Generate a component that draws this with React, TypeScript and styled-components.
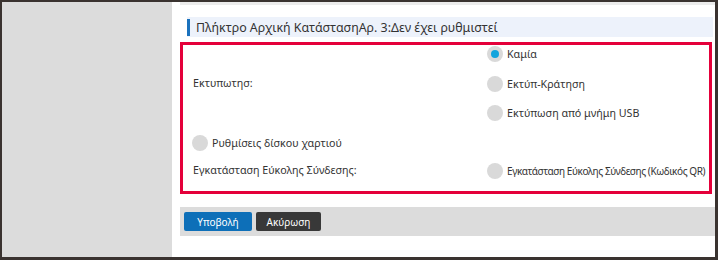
import React from "react";
import styled, { createGlobalStyle } from "styled-components";

const GlobalStyle = createGlobalStyle`
  body {
    margin: 0;
    font-family: "Noto Sans", "Open Sans", sans-serif;
    color: #333;
  }
`;

const Frame = styled.div`
  width: 718px;
  height: 260px;
  box-sizing: border-box;
  border: 2px solid #3a3330;
  border-right-width: 3px;
  border-bottom-width: 3px;
  display: grid;
  grid-template-columns: 170px minmax(0, 1fr);
  background: #fff;
  overflow: hidden;
`;

const Sidebar = styled.div`
  background: #dcdcdc;
`;

const Main = styled.div`
  padding-left: 8px;
  display: flex;
  flex-direction: column;
  min-width: 0;
`;

const TopStrip = styled.div`
  height: 3px;
  background: #ececec;
`;

const Title = styled.div`
  margin: 12px 2px 0 7px;
  height: 20px;
  background: #edf2fb;
  display: flex;
  align-items: center;
  font-size: 12.4px;
  color: #333;
  white-space: nowrap;
  &::before {
    content: "";
    width: 3px;
    height: 17px;
    background: #1b72bd;
    margin-right: 6px;
  }
`;

const FormBox = styled.div`
  margin: 5px 3px 0 0;
  height: 152px;
  box-sizing: border-box;
  border: 3px solid #e4003a;
  padding: 0 0 0 10px;
  display: grid;
  grid-template-columns: 294px minmax(0, 1fr);
  align-content: start;
  align-items: center;
  font-size: 10.7px;
`;

const Label = styled.div<{ $offset?: number }>`
  margin-top: ${(p) => p.$offset ?? 0}px;
  white-space: nowrap;
`;

const OptionList = styled.div`
  display: flex;
  flex-direction: column;
  gap: 11.5px;
`;

const Option = styled.label<{ $condensed?: boolean }>`
  display: flex;
  align-items: center;
  height: 18px;
  gap: 4px;
  white-space: nowrap;
  font-size: ${(p) => (p.$condensed ? "10px" : "inherit")};
  letter-spacing: ${(p) => (p.$condensed ? "-0.42px" : "0")};
`;

const Radio = styled.span<{ $checked?: boolean }>`
  flex: none;
  width: 16px;
  height: 16px;
  border-radius: 50%;
  background: #d9d9d9;
  display: inline-flex;
  align-items: center;
  justify-content: center;
  &::after {
    content: "";
    width: 8px;
    height: 8px;
    border-radius: 50%;
    background: ${(p) => (p.$checked ? "#12a4dd" : "transparent")};
  }
`;

const Row = styled.div<{ $gap: number }>`
  grid-column: 1 / span 2;
  display: grid;
  grid-template-columns: subgrid;
  align-items: center;
  margin-left: ${(p) => (p.$gap === 12 ? "-1px" : "0")};
  padding-top: ${(p) => p.$gap}px;
`;

const ButtonBar = styled.div`
  margin-top: 13px;
  height: 29px;
  box-sizing: border-box;
  background: #dcdcdc;
  display: flex;
  align-items: center;
  gap: 4px;
  padding-left: 4px;
`;

const Button = styled.button<{ $variant: "primary" | "dark" }>`
  height: 19px;
  border: none;
  border-radius: 2px;
  padding: 0;
  width: ${(p) => (p.$variant === "primary" ? "68px" : "65px")};
  background: ${(p) => (p.$variant === "primary" ? "#0d6fb8" : "#383838")};
  color: #fff;
  font-family: "Noto Sans", "Open Sans", sans-serif;
  font-size: 10px;
`;

export default function App() {
  return (
    <>
      <GlobalStyle />
      <Frame>
        <Sidebar />
        <Main>
          <TopStrip />
          <Title>Πλήκτρο Αρχική ΚατάστασηΑρ. 3:Δεν έχει ρυθμιστεί</Title>
          <FormBox>
            <Label $offset={-2}>Εκτυπωτησ:</Label>
            <OptionList>
              <Option>
                <Radio $checked />
                Καμία
              </Option>
              <Option>
                <Radio />
                Εκτύπ-Κράτηση
              </Option>
              <Option>
                <Radio />
                Εκτύπωση από μνήμη USB
              </Option>
            </OptionList>
            <Row $gap={12}>
              <Option>
                <Radio />
                Ρυθμίσεις δίσκου χαρτιού
              </Option>
            </Row>
            <Row $gap={10}>
              <Label $offset={-3}>Εγκατάσταση Εύκολης Σύνδεσης:</Label>
              <Option $condensed>
                <Radio />
                Εγκατάσταση Εύκολης Σύνδεσης (Κωδικός QR)
              </Option>
            </Row>
          </FormBox>
          <ButtonBar>
            <Button $variant="primary">Υποβολή</Button>
            <Button $variant="dark">Ακύρωση</Button>
          </ButtonBar>
        </Main>
      </Frame>
    </>
  );
}
